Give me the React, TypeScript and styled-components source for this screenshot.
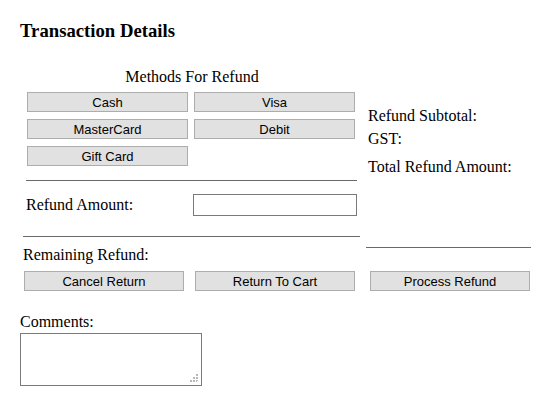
import styled, { createGlobalStyle } from "styled-components";

const GlobalStyle = createGlobalStyle`
  html, body {
    margin: 0;
    padding: 0;
    background: #ffffff;
  }
  body {
    font-family: "Liberation Serif", "Times New Roman", serif;
    color: #000;
  }
`;

const Page = styled.div`
  width: 549px;
  height: 405px;
  padding: 21px 0 0 20px;
  box-sizing: border-box;
`;

const Title = styled.h3`
  margin: 0;
  font-size: 18.72px;
  line-height: 20px;
  font-weight: bold;
`;

const Columns = styled.div`
  display: flex;
  align-items: flex-start;
  margin-top: 27px;
`;

const LeftColumn = styled.div`
  width: 346px;
  display: flex;
  flex-direction: column;
`;

const RightColumn = styled.div`
  width: 165px;
  padding-top: 39px;
  display: flex;
  flex-direction: column;
`;

const Text = styled.div<{ $indent?: number; $top?: number }>`
  font-size: 16px;
  line-height: 18px;
  margin-left: ${(p) => p.$indent ?? 0}px;
  margin-top: ${(p) => p.$top ?? 0}px;
  white-space: nowrap;
`;

const Heading = styled(Text)`
  width: 344px;
  text-align: center;
`;

const MethodGrid = styled.div`
  display: grid;
  grid-template-columns: 161px 161px;
  grid-auto-rows: 20px;
  column-gap: 6px;
  row-gap: 7px;
  margin: 6px 0 0 7px;
`;

const Button = styled.button<{ $width?: number }>`
  width: ${(p) => (p.$width ? `${p.$width}px` : "auto")};
  height: 20px;
  padding: 0;
  margin: 0;
  background: #e1e1e1;
  border: 1px solid #adadad;
  border-radius: 0;
  font-family: "Liberation Sans", Arial, sans-serif;
  font-size: 13px;
  color: #000;
  cursor: pointer;
`;

const Rule = styled.div<{ $indent: number; $width: number; $top: number }>`
  height: 1px;
  background: #6a6a6a;
  margin-left: ${(p) => p.$indent}px;
  margin-top: ${(p) => p.$top}px;
  width: ${(p) => p.$width}px;
`;

const AmountRow = styled.div`
  display: flex;
  align-items: center;
  margin: 13px 0 0 6px;
  height: 22px;
`;

const AmountLabel = styled(Text)`
  width: 167px;
`;

const AmountInput = styled.input`
  width: 164px;
  height: 22px;
  box-sizing: border-box;
  border: 1px solid #7a7a7a;
  padding: 0 3px;
  margin: 0;
  font-size: 13px;
`;

const ActionRow = styled.div`
  display: flex;
  margin-top: 7px;
  padding-left: 4px;
`;

const ActionButton = styled(Button)`
  width: 160px;
  margin-right: ${(p) => (p.$width ? p.$width : 0)}px;
`;

const CommentBox = styled.div`
  position: relative;
  width: 182px;
  height: 53px;
  margin-top: 2px;

  &::after {
    content: "";
    position: absolute;
    right: 3px;
    bottom: 3px;
    width: 2px;
    height: 2px;
    background: transparent;
    box-shadow:
      -1px -7px 0 #b8b8b8,
      -4px -4px 0 #b8b8b8, -1px -4px 0 #b8b8b8,
      -7px -1px 0 #b8b8b8, -4px -1px 0 #b8b8b8, -1px -1px 0 #b8b8b8;
    pointer-events: none;
  }
`;

const CommentArea = styled.textarea`
  width: 182px;
  height: 53px;
  box-sizing: border-box;
  border: 1px solid #7a7a7a;
  margin: 0;
  padding: 2px;
  resize: none;
  display: block;
`;

const methods = ["Cash", "Visa", "MasterCard", "Debit", "Gift Card"];

export default function App() {
  return (
    <>
      <GlobalStyle />
      <Page>
        <Title>Transaction Details</Title>
        <Columns>
          <LeftColumn>
            <Heading>Methods For Refund</Heading>
            <MethodGrid>
              {methods.map((m) => (
                <Button key={m}>{m}</Button>
              ))}
            </MethodGrid>
            <Rule $indent={6} $width={331} $top={14} />
            <AmountRow>
              <AmountLabel>Refund Amount:</AmountLabel>
              <AmountInput type="text" />
            </AmountRow>
            <Rule $indent={3} $width={337} $top={20} />
            <Text $indent={3} $top={9}>
              Remaining Refund:
            </Text>
          </LeftColumn>
          <RightColumn>
            <Text $indent={2}>Refund Subtotal:</Text>
            <Text $indent={2} $top={5}>
              GST:
            </Text>
            <Text $indent={2} $top={10}>
              Total Refund Amount:
            </Text>
            <Rule $indent={0} $width={165} $top={71} />
          </RightColumn>
        </Columns>
        <ActionRow>
          <ActionButton $width={11}>Cancel Return</ActionButton>
          <ActionButton $width={15}>Return To Cart</ActionButton>
          <ActionButton>Process Refund</ActionButton>
        </ActionRow>
        <Text $top={22}>Comments:</Text>
        <CommentBox>
          <CommentArea />
        </CommentBox>
      </Page>
    </>
  );
}
